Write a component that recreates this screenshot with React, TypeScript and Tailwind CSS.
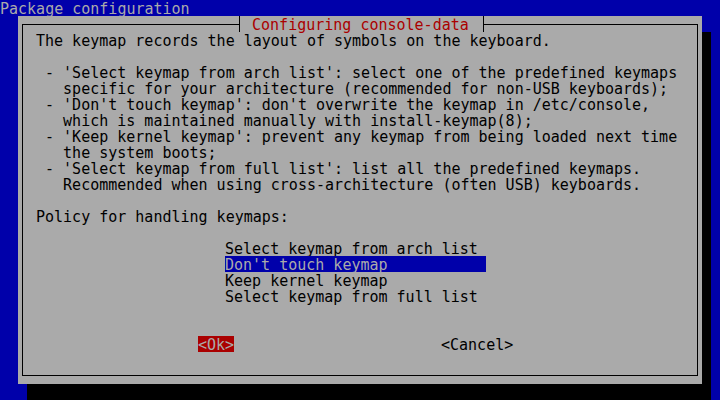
import React from 'react';

const intro = [
  'The keymap records the layout of symbols on the keyboard.',
  '',
  " - 'Select keymap from arch list': select one of the predefined keymaps",
  '   specific for your architecture (recommended for non-USB keyboards);',
  " - 'Don't touch keymap': don't overwrite the keymap in /etc/console,",
  '   which is maintained manually with install-keymap(8);',
  " - 'Keep kernel keymap': prevent any keymap from being loaded next time",
  '   the system boots;',
  " - 'Select keymap from full list': list all the predefined keymaps.",
  '   Recommended when using cross-architecture (often USB) keyboards.',
  '',
  'Policy for handling keymaps:',
  '',
];

const choices = [
  'Select keymap from arch list',
  "Don't touch keymap",
  'Keep kernel keymap',
  'Select keymap from full list',
];

const selected = 1;

const Row: React.FC<{ children?: React.ReactNode }> = ({ children }) => (
  <div className="h-4 whitespace-pre">{children}</div>
);

export default function App() {
  return (
    <div className="w-[720px] h-[400px] overflow-hidden bg-[#0000aa] text-[#aaaaaa] font-['DejaVu_Sans_Mono',monospace] text-[15px] leading-[19px]">
      <Row>Package configuration</Row>

      <div className="ml-[18px] w-[684px] h-[368px] flex flex-col bg-[#aaaaaa] text-black shadow-[9px_16px_0_0_#000]">
        <div className="flex-1 mx-[4px] my-[8px] pl-[13px] flex flex-col border border-black">
          {/* title sitting on the top border */}
          <div className="-mt-[9px] ml-[198px] h-4 flex">
            <div className="w-[9px] flex">
              <div className="w-[5px]" />
              <div className="w-px bg-black" />
              <div className="w-[3px] bg-[#aaaaaa]" />
            </div>
            <div className="bg-[#aaaaaa] text-[#aa0000] whitespace-pre">{' Configuring console-data '}</div>
            <div className="w-[9px] flex">
              <div className="w-[5px] bg-[#aaaaaa]" />
              <div className="w-px bg-black" />
              <div className="w-[3px]" />
            </div>
          </div>

          {intro.map((line, i) => (
            <Row key={i}>{line}</Row>
          ))}

          <div className="ml-[189px] flex flex-col">
            {choices.map((c, i) => (
              <div
                key={c}
                className={`h-4 w-[261px] whitespace-pre ${i === selected ? 'bg-[#0000aa] text-[#aaaaaa]' : ''}`}
              >
                {c}
              </div>
            ))}
          </div>

          <Row />
          <Row />

          <div className="h-4 flex whitespace-pre">
            <div className="ml-[162px] w-[36px] bg-[#aa0000] text-[#aaaaaa]">{'<Ok>'}</div>
            <div className="ml-[207px]">{'<Cancel>'}</div>
          </div>
        </div>
      </div>
    </div>
  );
}
